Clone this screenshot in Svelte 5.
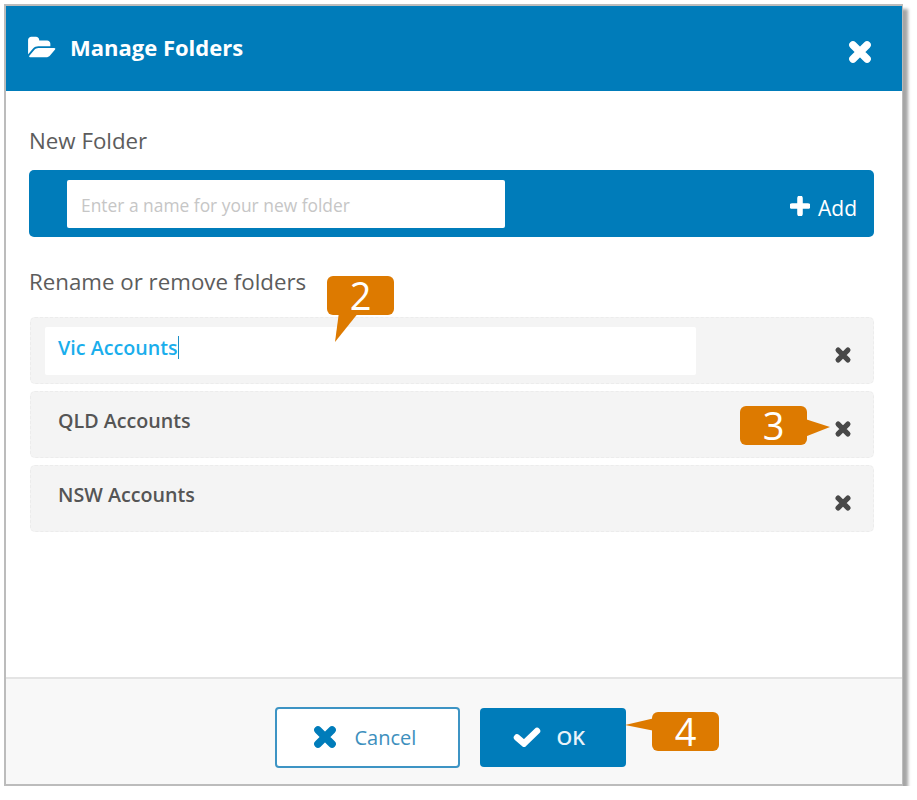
<script lang="ts">
    const folders = ["QLD Accounts", "NSW Accounts"];
</script>

{#snippet cross()}
    <svg class="cross" viewBox="0 0 24 24" aria-hidden="true">
        <path d="M5.5 5.500 18.500 18.500M18.500 5.500 5.500 18.500" />
    </svg>
{/snippet}

<div class="window">
    <header class="titlebar">
        <svg class="folder" viewBox="0 0 1920 1792" aria-hidden="true">
            <path d="M1879 952q0 31-31 66l-336 396q-43 51-120.500 86.500t-143.500 35.500h-1088q-34 0-60.500-13t-26.500-43q0-31 31-66l336-396q43-51 120.500-86.500t143.500-35.500h1088q34 0 60.500 13t26.500 43zm-343-344v160h-832q-94 0-197 47.500t-164 119.500l-337 396-5 6q0-4-.5-12.500t-.5-12.500v-960q0-92 66-158t158-66h320q92 0 158 66t66 158v32h544q92 0 158 66t66 158z" />
        </svg>
        <h1>Manage Folders</h1>
        <button class="close" aria-label="Close">{@render cross()}</button>
    </header>

    <main class="content">
        <p class="label first">New Folder</p>
        <div class="new-bar">
            <input type="text" placeholder="Enter a name for your new folder" />
            <button class="add">
                <svg class="plus" viewBox="0 0 18 18" aria-hidden="true">
                    <path d="M9 2v14M2 9h14" />
                </svg>
                Add
            </button>
        </div>

        <p class="label second">Rename or remove folders</p>
        <ul class="rows">
            <li class="row">
                <div class="edit"><span>Vic Accounts</span><i class="caret"></i></div>
                <button class="remove" aria-label="Remove">{@render cross()}</button>
            </li>
            {#each folders as name}
                <li class="row">
                    <span class="name">{name}</span>
                    <button class="remove" aria-label="Remove">{@render cross()}</button>
                </li>
            {/each}
        </ul>
    </main>

    <footer class="actions">
        <button class="btn cancel">{@render cross()}<span>Cancel</span></button>
        <button class="btn ok">
            <svg class="check" viewBox="0 0 28 20" aria-hidden="true">
                <path d="M4 10.500 11 16.500 24 4" />
            </svg>
            <span>OK</span>
        </button>
    </footer>

    <!-- numbered annotations on top of the dialog -->
    <div class="callout c2"><svg viewBox="0 0 67 67" aria-hidden="true"><path d="M12 36 8 66 32 36z" /></svg><b>2</b></div>
    <div class="callout c3"><svg viewBox="0 0 90 39" aria-hidden="true"><path d="M62 12 90 21 62 32z" /></svg><b>3</b></div>
    <div class="callout c4"><svg viewBox="0 0 94 39" aria-hidden="true"><path d="M30 6 0 13 30 19z" /></svg><b>4</b></div>
</div>

<style>
    :global(body) {
        margin: 0;
        background: #fff;
    }

    * {
        box-sizing: border-box;
    }

    .window {
        position: relative;
        display: flex;
        flex-direction: column;
        width: 899px;
        height: 782px;
        margin: 4px 0 0 4px;
        background: #fff;
        border: 2px solid #bcbcbc;
        border-right-width: 1px;
        box-shadow: 5px 5px 3px #a6a6a6;
        font-family: "Open Sans", "Liberation Sans", sans-serif;
        color: #5a5a5a;
    }

    .titlebar {
        display: flex;
        align-items: center;
        height: 85px;
        padding: 0 29px 0 22px;
        flex: none;
        background: #007cba;
        color: #fff;
    }

    .folder {
        width: 28px;
        height: 26px;
        margin-top: -2px;
        fill: #fff;
    }

    h1 {
        margin: -3px 0 0 14px;
        font-size: 22px;
        font-weight: 700;
        flex: 1;
    }

    button {
        padding: 0;
        border: 0;
        background: none;
        font: inherit;
        color: inherit;
    }

    .cross {
        display: block;
        fill: none;
        stroke: currentColor;
        stroke-width: 7;
        stroke-linecap: round;
    }

    .close {
        margin-top: 7px;
    }

    .close .cross {
        width: 26px;
        height: 26px;
    }

    .content {
        flex: 1;
        padding: 0 28px 0 23px;
    }

    .label {
        margin: 0;
        font-size: 22.300px;
        line-height: 30px;
        color: #5c5c5c;
    }

    .label.first {
        margin-top: 35px;
    }

    .label.second {
        margin-top: 30px;
    }

    .new-bar {
        display: flex;
        justify-content: space-between;
        height: 67px;
        margin-top: 14px;
        padding: 10px 16px 0 38px;
        background: #007cba;
        border-radius: 5px;
    }

    .new-bar input {
        width: 438px;
        height: 48px;
        padding: 2px 14px 0;
        border: 0;
        border-radius: 2px;
        background: #fff;
        font: 17.400px "Open Sans", "Liberation Sans", sans-serif;
    }

    .new-bar input::placeholder {
        color: #c6c6c6;
        opacity: 1;
    }

    .add {
        display: flex;
        align-items: center;
        gap: 8px;
        height: 56px;
        color: #fff;
        font-size: 21px;
        margin-right: 1px;
    }

    .plus {
        width: 20px;
        height: 20px;
        fill: none;
        stroke: #fff;
        stroke-width: 5;
        stroke-linecap: round;
        margin-top: -4px;
    }

    .rows {
        display: flex;
        flex-direction: column;
        gap: 7px;
        margin: 20px 0 0;
        padding: 0;
        list-style: none;
    }

    .row {
        position: relative;
        display: flex;
        justify-content: space-between;
        height: 67px;
        margin-left: 1px;
        padding: 9px 21px 0 14px;
        background: #f4f4f4;
        border: 1px dashed #ececec;
        border-radius: 5px;
    }

    .edit {
        display: flex;
        align-items: center;
        width: 651px;
        height: 48px;
        padding: 0 0 8px 13px;
        background: #fff;
        border-radius: 2px;
        font-size: 19.700px;
        font-weight: 600;
        color: #1aaeec;
    }

    .caret {
        width: 1.500px;
        height: 23px;
        background: #1b8fc7;
    }

    .name {
        padding: 0 0 0 13px;
        font-size: 19.700px;
        font-weight: 600;
        line-height: 40px;
        color: #555;
    }

    .remove {
        align-self: flex-start;
        margin-top: 19px;
        color: #484848;
    }

    .remove .cross {
        width: 18px;
        height: 18px;
    }

    .actions {
        display: flex;
        justify-content: center;
        align-items: center;
        gap: 20px;
        height: 107px;
        flex: none;
        padding: 11px 8px 0 0;
        background: #f8f8f8;
        border-top: 2px solid #e4e4e4;
    }

    .btn {
        display: flex;
        align-items: center;
        border-radius: 4px;
        font-size: 20px;
        font-weight: 600;
    }

    .cancel {
        width: 185px;
        height: 61px;
        gap: 17px;
        padding-left: 35px;
        background: #fff;
        border: 2px solid #3d94c4;
        color: #3d8fbd;
    }

    .cancel span {
        font-weight: 400;
    }

    .cancel .cross {
        width: 26px;
        height: 26px;
        color: #007cba;
    }

    .ok {
        width: 146px;
        height: 59px;
        gap: 16px;
        padding-left: 33px;
        background: #007cba;
        color: #e8f3f9;
    }

    .check {
        width: 28px;
        height: 20px;
        fill: none;
        stroke: #fff;
        stroke-width: 6.500;
        stroke-linecap: round;
    }

    .callout {
        position: absolute;
        width: 67px;
        height: 39px;
        background: #dd7a00;
        border-radius: 6px;
        color: #fff;
        text-align: center;
        font-size: 38px;
        line-height: 38px;
    }

    .callout b {
        position: relative;
        font-weight: 400;
    }

    .callout svg {
        position: absolute;
        top: 0;
        left: 0;
        fill: #dd7a00;
        overflow: visible;
    }

    .c2 {
        left: 321px;
        top: 270px;
    }

    .c2 svg {
        width: 67px;
        height: 67px;
    }

    .c3 {
        left: 734px;
        top: 400px;
    }

    .c3 svg {
        width: 90px;
        height: 39px;
    }

    .c4 {
        left: 646px;
        top: 706px;
    }

    .c4 svg {
        left: -27px;
        width: 94px;
        height: 39px;
    }
</style>
